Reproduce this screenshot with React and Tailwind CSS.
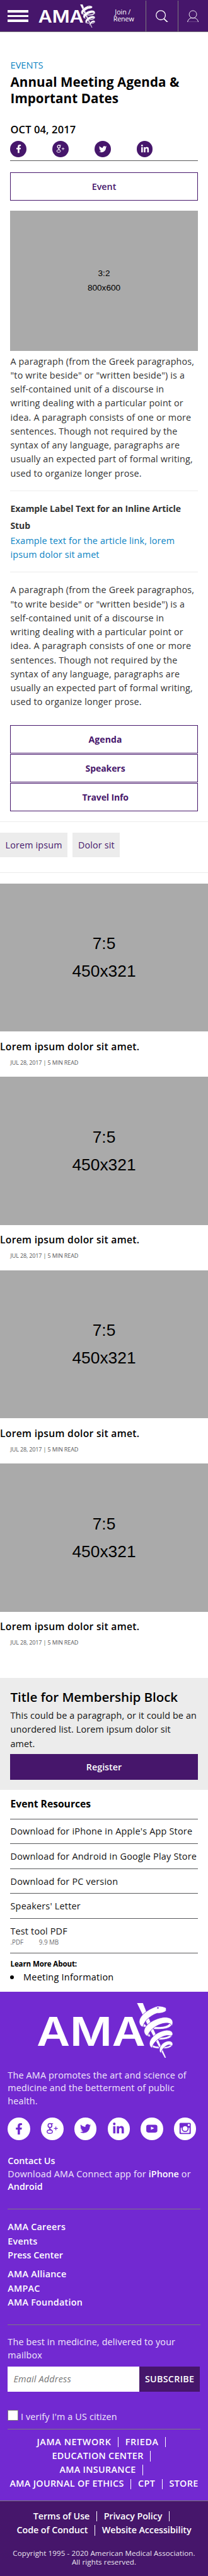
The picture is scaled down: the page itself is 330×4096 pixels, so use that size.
import React from "react";
import { FaFacebookF, FaTwitter, FaLinkedinIn } from "react-icons/fa";

const PARAGRAPH = [
  "A paragraph (from the Greek paragraphos,",
  '"to write beside" or "written beside") is a',
  "self-contained unit of a discourse in",
  "writing dealing with a particular point or",
  "idea. A paragraph consists of one or more",
  "sentences. Though not required by the",
  "syntax of any language, paragraphs are",
  "usually an expected part of formal writing,",
  "used to organize longer prose.",
];

function Lines({ lines }) {
  return lines.map((line, i) => (
    <React.Fragment key={line}>
      {i > 0 && <br />}
      {line}
    </React.Fragment>
  ));
}

/* AMA wordmark with the staff and serpent; `edge` is the outline between coils. */
function Logo({ className, edge }) {
  return (
    <svg viewBox="18 27 783 318" preserveAspectRatio="none" className={className} aria-label="AMA">
      <text
        x="15"
        y="275"
        textLength="627"
        lengthAdjust="spacingAndGlyphs"
        fill="#fff"
        className="font-['Inter',sans-serif] text-[232px] font-semibold"
      >
        AMA
      </text>
      <g fill="#fff" stroke={edge} strokeWidth="3" strokeLinejoin="round">
        <path d="M592 25H629L678 150L764 345H754L660 165Z" />
        <path d="M610 148C618 162 632 168 654 166L640 148Z" />
        <path d="M800 138C798 168 765 182 692 179L686 163C740 168 772 160 784 143Z" />
        <path d="M638 196C642 212 652 222 674 222L664 202Z" />
        <path d="M800 208C798 228 768 240 722 240L714 225C750 228 775 222 786 210Z" />
        <path d="M668 268C676 284 694 290 724 290L720 278C700 278 684 272 678 260Z" />
        <path d="M800 266C796 284 772 292 742 290L744 280C766 281 782 276 788 268Z" />
        <path d="M763 56C754 50 738 44 712 45C660 60 606 100 607 137C608 152 616 162 628 166C632 150 640 134 652 122C670 106 690 92 712 86C732 88 758 80 763 70Z" />
        <path d="M801 142C802 120 784 108 750 109C700 115 636 150 635 190C636 204 644 214 656 220C660 198 678 180 700 164C732 144 772 136 790 150L798 160Z" />
        <path d="M801 210C802 192 788 183 762 184C716 190 666 226 666 262C666 274 672 282 682 288C684 266 700 248 720 234C746 216 776 210 790 218Z" />
        <path d="M801 268C802 252 790 245 772 247C744 252 724 276 724 300C724 308 728 314 734 316C736 300 746 286 762 276C774 268 786 266 794 276Z" />
      </g>
      <ellipse cx="715" cy="55" rx="6" ry="3.500" fill={edge} />
    </svg>
  );
}

function GooglePlus({ className }) {
  return (
    <svg viewBox="0 0 129 129" className={className} fill="none" stroke="currentColor">
      <ellipse cx="52" cy="46" rx="11" ry="11.500" strokeWidth="6" />
      <path d="M54 35.500H70" strokeWidth="4.500" />
      <path d="M54 58C46 64 50 67 60 73" strokeWidth="6" />
      <ellipse cx="51" cy="82" rx="15.500" ry="10" strokeWidth="5" />
      <path d="M75 63.500H97M86 53V74" strokeWidth="4.500" />
    </svg>
  );
}

function YouTube({ className }) {
  return (
    <svg viewBox="0 0 129 129" className={className}>
      <rect x="33" y="42" width="64" height="45" rx="12" fill="currentColor" />
      <path d="M60 53L79 62L60 71Z" fill="#fff" />
    </svg>
  );
}

function Instagram({ className }) {
  return (
    <svg viewBox="0 0 129 129" className={className}>
      <rect x="32" y="31" width="65" height="65" rx="6" fill="currentColor" />
      <path d="M39 59V85Q39 89 43 89H86Q90 89 90 85V59H80V62H50V59Z" fill="#fff" />
      <circle cx="64.500" cy="64" r="20" fill="currentColor" />
      <circle cx="64.500" cy="64" r="14" fill="#fff" />
      <rect x="80" y="38" width="11" height="10" rx="1" fill="#fff" />
    </svg>
  );
}

function Circle({ small, children }) {
  return (
    <a
      className={
        small
          ? "flex size-[31px] items-center justify-center rounded-full bg-[#46166b] text-white"
          : "flex size-[43px] items-center justify-center rounded-full bg-white text-[#7229d1]"
      }
    >
      {children}
    </a>
  );
}

function OutlineButton({ children, className = "" }) {
  return (
    <a className={`flex h-[54px] items-center justify-center border border-[#46166b] text-[#46166b] ${className}`}>
      {children}
    </a>
  );
}

function Card() {
  return (
    <article className="h-[373.1px]">
      <div className="flex h-[285.7px] flex-col justify-center bg-[#aaaaaa] text-center font-['Liberation_Sans',sans-serif] text-[32px] leading-[53.6px] text-black">
        <span>7:5</span>
        <span>450x321</span>
      </div>
      <h3 className="mt-[17.6px] text-[19px] font-semibold leading-6 tracking-[0.36px] text-black">
        Lorem ipsum dolor sit amet.
      </h3>
      <p className="mt-2.5 pl-5 text-[11px] leading-4 tracking-[-0.2px] text-[#58595b]">JUL 28, 2017 | 5 MIN READ</p>
    </article>
  );
}

function Resource({ children }) {
  return <li className="h-12 border-t border-[#58595b] pt-[10.7px] tracking-[0.26px]">{children}</li>;
}

function Pipe() {
  return <span className="mx-[13px] mt-[4px] h-5 w-0 border-l border-white" />;
}

function LinkRow({ items, trailing, className = "" }) {
  return (
    <div className={`flex h-[27px] justify-center ${className}`}>
      {items.map((item, i) => (
        <React.Fragment key={item}>
          {i > 0 && <Pipe />}
          <a>{item}</a>
        </React.Fragment>
      ))}
      {trailing && <span className="ml-[13px] mr-[10px] mt-[4px] h-5 w-0 border-l border-white" />}
    </div>
  );
}

export default function App() {
  return (
    <div className="w-full overflow-hidden bg-white">
      <div className="h-[4969px] w-full whitespace-nowrap font-['Open_Sans','Noto_Sans',sans-serif] text-[17.4px] [zoom:0.8243]">
        <header className="flex h-[62px] border-b border-[#7d7b7d] bg-[#46166b] text-white">
          <div className="flex w-[280px] shrink-0">
            <button className="ml-[15px] mt-5 flex h-[22px] w-10 flex-col justify-between">
              <span className="h-1 w-full bg-white" />
              <span className="h-1 w-full bg-white" />
              <span className="h-1 w-full bg-white" />
            </button>
            <Logo className="ml-[19px] mt-2 h-[45px] w-[109px]" edge="#46166b" />
            <a className="ml-[35px] mt-[16.500px] text-[13px] leading-[14px] tracking-[-0.1px]">
              &nbsp;Join /<br />Renew
            </a>
          </div>
          <a className="mt-px flex w-[62px] shrink-0 justify-center border-l border-[#7d7b7d] pt-[18px]">
            <svg viewBox="0 0 24 24" className="size-6" fill="none" stroke="currentColor" strokeWidth="1.600">
              <circle cx="9.800" cy="9.900" r="8.900" />
              <path d="M15.800 16.500L23 23.600" strokeWidth="2" />
            </svg>
          </a>
          <a className="mt-px flex grow border-l border-[#7d7b7d] pl-[17px] pt-[18px]">
            <svg viewBox="0 0 22 24" className="h-6 w-[22px]" fill="none" stroke="currentColor" strokeWidth="1.100">
              <circle cx="11" cy="8.300" r="7.200" />
              <path d="M.6 23.400C1 19.500 3.600 16.600 7.200 15.400H14.800C18.400 16.600 21 19.500 21.400 23.400Z" />
            </svg>
          </a>
        </header>

        <main>
          <section className="h-[884px] px-5 pt-[51px]">
            <p className="text-[17.800px] leading-[26px] text-[#0a83c3]">EVENTS</p>
            <h1 className="mt-[3px] text-[25px] font-bold leading-8 tracking-[0.1px] text-black">
              <Lines lines={["Annual Meeting Agenda &", "Important Dates"]} />
            </h1>
            <p className="mt-[29px] text-[20px] font-semibold leading-7 tracking-[0.16px] text-black">OCT 04, 2017</p>
            <div className="mt-[9px] flex h-[39px] gap-[50px] border-b border-[#58595b]">
              <Circle small><FaFacebookF className="size-4" /></Circle>
              <Circle small><GooglePlus className="size-[31px]" /></Circle>
              <Circle small><FaTwitter className="size-[15px]" /></Circle>
              <Circle small><FaLinkedinIn className="size-[17px]" /></Circle>
            </div>
            <OutlineButton className="mt-[22px] font-semibold">Event</OutlineButton>
            <div className="mt-5 flex h-[270px] flex-col justify-center bg-[#aaaaaa] text-center font-['Liberation_Sans',sans-serif] text-[16.500px] leading-[27px] text-black">
              <span>3:2</span>
              <span>800x600</span>
            </div>
            <p className="mt-[7px] leading-[27px] tracking-[0.21px] text-[#333]">
              <Lines lines={PARAGRAPH} />
            </p>
          </section>

          <section className="h-[158px] px-5">
            <div className="h-full border-y border-[#ececec] pt-[19px]">
              <h2 className="text-[17px] font-bold leading-8 tracking-[-0.1px] text-[#333]">
                <Lines lines={["Example Label Text for an Inline Article", "Stub"]} />
              </h2>
              <a className="block leading-[26px] tracking-[0.2px] text-[#0a83c3]">
                <Lines lines={["Example text for the article link, lorem", "ipsum dolor sit amet"]} />
              </a>
            </div>
          </section>

          <section className="h-[481px] px-5 pt-[21px]">
            <p className="leading-[27px] tracking-[0.21px] text-[#333]">
              <Lines lines={PARAGRAPH} />
            </p>
            <div className="mt-[31px] flex flex-col gap-0.5 text-[17px] font-bold">
              <OutlineButton className="pl-[5px] tracking-[0.2px]">Agenda</OutlineButton>
              <OutlineButton className="pl-[5px] tracking-[-0.1px]">Speakers</OutlineButton>
              <OutlineButton className="pl-[5px] tracking-[-0.18px]">Travel Info</OutlineButton>
            </div>
          </section>

          <section className="flex h-[99px] gap-2.5 border-y border-[#ececec] pt-5 tracking-[0.2px] text-[#46166b]">
            <a className="flex h-[47px] w-[130px] items-center justify-center bg-[#ececec]">Lorem ipsum</a>
            <a className="flex h-[47px] w-[91px] items-center justify-center bg-[#ececec]">Dolor sit</a>
          </section>

          <section className="h-[1553px] pt-5">
            <Card />
            <Card />
            <Card />
            <Card />
          </section>

          <section className="h-[216px] bg-[#ececec] px-5 pt-5">
            <h2 className="text-[25px] font-semibold leading-8 tracking-[-0.1px] text-black">Title for Membership Block</h2>
            <p className="mt-[7.500px] text-[17.500px] leading-[27px] tracking-[0.14px] text-[#111]">
              <Lines lines={["This could be a paragraph, or it could be an", "unordered list. Lorem ipsum dolor sit", "amet."]} />
            </p>
            <a className="mt-[6.500px] flex h-[49px] items-center justify-center bg-[#46166b] text-[17.400px] font-semibold text-white">
              Register
            </a>
          </section>

          <section className="h-[389px] px-5 pt-[13.500px] text-black">
            <h2 className="text-[19px] font-bold leading-7">Event Resources</h2>
            <ul className="mt-[13.500px] text-[17.500px] leading-[27px] text-[#111]">
              <Resource>Download for iPhone in Apple's App Store</Resource>
              <Resource>Download for Android in Google Play Store</Resource>
              <Resource>Download for PC version</Resource>
              <Resource>Speakers' Letter</Resource>
              <li className="h-[68px] border-y border-[#58595b] pt-[10.700px] tracking-[0.2px]">
                Test tool PDF
                <div className="flex text-[12px] leading-4 tracking-[-0.07px] text-[#6d6e70]">
                  <span className="w-[55px]">.PDF</span>
                  <span>9.9 MB</span>
                </div>
              </li>
            </ul>
            <h3 className="mt-3 text-[14px] font-bold leading-[18px] tracking-[-0.14px]">Learn More About:</h3>
            <p className="mt-[3px] flex items-center text-[17.500px] leading-[27px] tracking-[0.33px]">
              <span className="mr-[18px] size-[7px] rounded-full bg-black" />
              Meeting Information
            </p>
          </section>
        </main>

        <footer className="text-white">
          <section className="h-[983px] border-b border-[#7d7b7d] bg-[#7229d1] px-[15px] pt-[22px]">
            <Logo className="ml-14 h-[106px] w-[261px]" edge="#7229d1" />
            <div className="h-[292px] border-b border-[#7d7b7d] pt-[21px] leading-[25px]">
              <p className="tracking-[0.24px] text-white/90">
                <Lines lines={["The AMA promotes the art and science of", "medicine and the betterment of public", "health."]} />
              </p>
              <div className="mt-[19px] flex gap-[21px]">
                <Circle><FaFacebookF className="size-[22px]" /></Circle>
                <Circle><GooglePlus className="size-[43px]" /></Circle>
                <Circle><FaTwitter className="size-[21px]" /></Circle>
                <Circle><FaLinkedinIn className="size-6" /></Circle>
                <Circle><YouTube className="size-[43px]" /></Circle>
                <Circle><Instagram className="size-[43px]" /></Circle>
              </div>
              <h3 className="mt-[27.500px] font-semibold leading-[26px]">Contact Us</h3>
              <p className="tracking-[0.25px] text-white/90">
                Download AMA Connect app for <b className="font-semibold tracking-normal text-white">iPhone</b> or
                <br />
                <b className="font-semibold tracking-normal text-white">Android</b>
              </p>
            </div>
            <div className="h-[223px] border-b border-[#7d7b7d] pt-[21px] font-semibold leading-[27px] tracking-[0.3px]">
              <p><Lines lines={["AMA Careers", "Events"]} /></p>
              <p className="tracking-normal">Press Center</p>
              <p className="mt-2.5"><Lines lines={["AMA Alliance", "AMPAC", "AMA Foundation"]} /></p>
            </div>
            <div className="h-[201px] border-b border-[#7d7b7d] pt-[21px]">
              <p className="leading-[25px] tracking-[0.21px] text-white/90">
                <Lines lines={["The best in medicine, delivered to your", "mailbox"]} />
              </p>
              <div className="mt-[9px] flex h-[49px]">
                <div className="flex w-[253px] items-center bg-white pb-px pl-[11px] italic tracking-[0.25px] text-[#757575]">
                  Email Address
                </div>
                <div className="flex w-[117px] items-center justify-center bg-[#46166b] pb-px font-semibold tracking-[0.35px]">SUBSCRIBE</div>
              </div>
              <label className="mt-[35px] flex h-5 gap-[5px]">
                <span className="size-5 border border-[#7d7b7d] bg-white" />
                <span className="leading-[26px] tracking-[0.2px] text-white/90">I verify I'm a US citizen</span>
              </label>
            </div>
            <nav className="pt-[11px] font-semibold leading-[27px] tracking-[0.4px]">
              <LinkRow items={["JAMA NETWORK", "FRIEDA"]} trailing className="tracking-[0.75px]" />
              <LinkRow items={["EDUCATION CENTER"]} trailing />
              <LinkRow items={["AMA INSURANCE"]} trailing />
              <LinkRow items={["AMA JOURNAL OF ETHICS", "CPT", "STORE"]} />
            </nav>
          </section>
          <section className="h-36 bg-[#46166b] pt-[15px]">
            <nav className="font-semibold leading-[27px] tracking-[-0.1px]">
              <LinkRow items={["Terms of Use", "Privacy Policy"]} trailing />
              <LinkRow items={["Code of Conduct", "Website Accessibility"]} />
            </nav>
            <p className="mt-[23.500px] text-center text-[14px] leading-4 tracking-[0.14px] text-white/90">
              <Lines lines={["Copyright 1995 - 2020 American Medical Association.", "All rights reserved."]} />
            </p>
          </section>
        </footer>
      </div>
    </div>
  );
}
